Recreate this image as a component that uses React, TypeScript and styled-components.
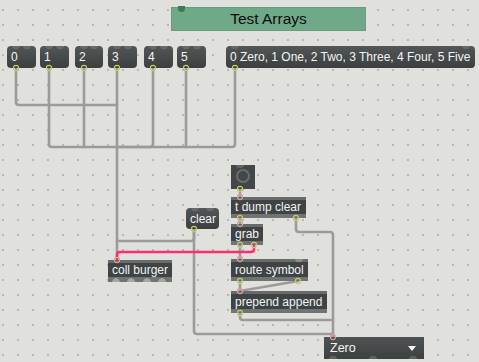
import React from 'react';
import styled, { createGlobalStyle } from 'styled-components';

const Global = createGlobalStyle`
  html, body { margin: 0; padding: 0; background: #e0e1dc; }
  body { font-family: "Liberation Sans", Arial, sans-serif; }
`;

const Canvas = styled.div`
  position: relative;
  width: 479px;
  height: 362px;
  overflow: hidden;
  background-color: #e0e1dc;
  background-image: radial-gradient(circle at 1px 1px, #a9aaa5 0.6px, transparent 1px);
  background-size: 15px 15px;
  background-position: 2px 9px;
`;

const Layer = styled.svg<{ $z: number }>`
  position: absolute;
  left: 0;
  top: 0;
  width: 479px;
  height: 362px;
  z-index: ${(p) => p.$z};
  pointer-events: none;
`;

type Pos = { $x: number; $y: number; $w: number; $h: number };

const Node = styled.div<Pos>`
  position: absolute;
  left: ${(p) => p.$x}px;
  top: ${(p) => p.$y}px;
  width: ${(p) => p.$w}px;
  height: ${(p) => p.$h}px;
  box-sizing: border-box;
  z-index: 2;
  font-size: 12px;
  white-space: nowrap;
`;

const Comment = styled(Node)`
  background: #6fa988;
  border: 1px solid #679d7f;
  color: #0c0c0c;
  font-size: 15.5px;
  display: flex;
  align-items: center;
  justify-content: center;
  &::before {
    content: '';
    position: absolute;
    left: 6px;
    top: -2px;
    width: 7px;
    height: 6px;
    border-radius: 0 0 4px 4px;
    background: #3f7a57;
  }
`;

const Message = styled(Node)`
  border-radius: 4px;
  background:
    radial-gradient(circle at 9px -1px, #666a6a 4px, transparent 4.6px),
    radial-gradient(circle at calc(100% - 9px) -1px, #666a6a 4px, transparent 4.6px),
    linear-gradient(#525656, #3c3f3f);
  color: #f3f6f7;
  padding-left: 4px;
  display: flex;
  align-items: center;
`;

const ObjectBox = styled(Node)`
  display: flex;
  flex-direction: column;
  color: #f0f4f5;
`;

const ObjTop = styled.div<{ $bumps?: number[] }>`
  height: 3px;
  flex: none;
  background: ${(p) =>
    [
      ...(p.$bumps ?? []).map(
        (b) => `radial-gradient(circle at ${b}px 0px, #8c8f8f 3.5px, transparent 4px)`
      ),
      '#686b6b',
    ].join(', ')};
`;

const ObjBody = styled.div`
  flex: 1;
  background: #3f4343;
  padding: 0 4px;
  display: flex;
  align-items: center;
  line-height: 14px;
`;

const ObjBottom = styled.div<{ $bumps?: number[]; $h: number }>`
  height: ${(p) => p.$h}px;
  flex: none;
  background: ${(p) =>
    [
      ...(p.$bumps ?? []).map(
        (b) => `radial-gradient(circle at ${b}px 100%, #a4a7a7 3.5px, transparent 4px)`
      ),
      '#717474',
    ].join(', ')};
`;

const Bang = styled(Node)`
  background:
    radial-gradient(circle at 9px -1px, #5f6363 4px, transparent 4.6px),
    #434747;
  display: flex;
  align-items: center;
  justify-content: center;
`;

const BangRing = styled.div`
  width: 14px;
  height: 14px;
  box-sizing: border-box;
  border-radius: 50%;
  border: 2px solid #6a6e6e;
  margin: -2px 0 0 0;
`;

const UMenu = styled(Node)`
  background:
    radial-gradient(circle at 9px calc(100% + 1px), #5d6161 4px, transparent 4.6px),
    radial-gradient(circle at 49px calc(100% + 1px), #5d6161 4px, transparent 4.6px),
    radial-gradient(circle at 89px calc(100% + 1px), #5d6161 4px, transparent 4.6px),
    linear-gradient(#4f5353, #3d4040);
  color: #f3f6f7;
  padding: 0 8px 0 6px;
  display: flex;
  align-items: center;
  justify-content: space-between;
  font-size: 12.5px;
`;

const Arrow = styled.div`
  width: 0;
  height: 0;
  border-left: 4px solid transparent;
  border-right: 4px solid transparent;
  border-top: 5px solid #f3f6f7;
  margin-top: 1px;
`;

type Pt = [number, number];

function roundPath(pts: Pt[], r = 3): string {
  let d = `M${pts[0][0]} ${pts[0][1]}`;
  for (let i = 1; i < pts.length - 1; i++) {
    const [x0, y0] = pts[i - 1];
    const [x1, y1] = pts[i];
    const [x2, y2] = pts[i + 1];
    const l1 = Math.hypot(x1 - x0, y1 - y0);
    const l2 = Math.hypot(x2 - x1, y2 - y1);
    const rr = Math.min(r, l1 / 2, l2 / 2);
    const ax = x1 - ((x1 - x0) / l1) * rr;
    const ay = y1 - ((y1 - y0) / l1) * rr;
    const bx = x1 + ((x2 - x1) / l2) * rr;
    const by = y1 + ((y2 - y1) / l2) * rr;
    d += ` L${ax} ${ay} Q${x1} ${y1} ${bx} ${by}`;
  }
  const last = pts[pts.length - 1];
  d += ` L${last[0]} ${last[1]}`;
  return d;
}

const grayCords: Pt[][] = [
  [[16, 68], [16, 105], [117, 105]],
  [[49, 68], [49, 147], [117, 147]],
  [[84, 68], [84, 147]],
  [[153, 68], [153, 147], [117, 147]],
  [[186, 68], [186, 147]],
  [[235, 68], [235, 147], [117, 147]],
  [[117, 68], [117, 260]],
  [[194, 229], [194, 241], [117, 241]],
  [[194, 229], [194, 334], [333, 334], [333, 337]],
  [[296, 218], [296, 232], [333, 232], [333, 337]],
  [[240, 313], [240, 320], [333, 320]],
  [[240, 189], [240, 197]],
  [[240, 218], [240, 224]],
  [[240, 245], [240, 259]],
  [[240, 281], [240, 291]],
  [[298, 281], [240, 291]],
];

const pinkCords: Pt[][] = [[[254, 245], [254, 252], [117, 252], [117, 260]]];

const outlets: Pt[] = [
  [16, 68], [49, 68], [84, 68], [117, 68], [153, 68], [186, 68], [235, 68],
  [194, 229], [240, 189], [240, 218], [296, 218], [240, 245], [254, 245],
  [240, 281], [298, 281], [240, 313],
];

const inlets: Pt[] = [
  [240, 197], [240, 224], [240, 259], [240, 291], [117, 260], [333, 337],
];

const messages = [
  { x: 7, w: 29, label: '0' },
  { x: 40, w: 29, label: '1' },
  { x: 75, w: 28, label: '2' },
  { x: 108, w: 29, label: '3' },
  { x: 144, w: 29, label: '4' },
  { x: 177, w: 29, label: '5' },
  { x: 226, w: 249, label: '0 Zero, 1 One, 2 Two, 3 Three, 4 Four, 5 Five' },
];

const objects = [
  { x: 231, y: 197, w: 75, h: 21, label: 't dump clear', top: [] as number[], bottom: [] as number[], bh: 4 },
  { x: 231, y: 224, w: 32, h: 21, label: 'grab', top: [], bottom: [], bh: 4 },
  { x: 231, y: 259, w: 77, h: 22, label: 'route symbol', top: [68], bottom: [], bh: 4 },
  { x: 231, y: 291, w: 96, h: 22, label: 'prepend append', top: [], bottom: [], bh: 4 },
  { x: 108, y: 260, w: 64, h: 22, label: 'coll burger', top: [], bottom: [8, 23, 39, 54], bh: 5 },
];

export default function App() {
  return (
    <>
      <Global />
      <Canvas>
        <Layer $z={1} viewBox="0 0 479 362">
          {grayCords.map((c, i) => (
            <path key={i} d={roundPath(c)} fill="none" stroke="#9b9b9b" strokeWidth={2.6} strokeLinecap="round" />
          ))}
          {pinkCords.map((c, i) => (
            <path key={i} d={roundPath(c)} fill="none" stroke="#ff2c6e" strokeWidth={2.6} strokeLinecap="round" />
          ))}
        </Layer>

        <Comment $x={171} $y={7} $w={195} $h={24}>Test Arrays</Comment>

        {messages.map((m) => (
          <Message key={m.label} $x={m.x} $y={46} $w={m.w} $h={22}>
            {m.label}
          </Message>
        ))}

        <Message $x={186} $y={208} $w={33} $h={21}>clear</Message>

        <Bang $x={231} $y={165} $w={24} $h={24}>
          <BangRing />
        </Bang>

        {objects.map((o) => (
          <ObjectBox key={o.label} $x={o.x} $y={o.y} $w={o.w} $h={o.h}>
            <ObjTop $bumps={o.top} />
            <ObjBody>{o.label}</ObjBody>
            <ObjBottom $bumps={o.bottom} $h={o.bh} />
          </ObjectBox>
        ))}

        <UMenu $x={324} $y={337} $w={100} $h={22}>
          <span>Zero</span>
          <Arrow />
        </UMenu>

        <Layer $z={3} viewBox="0 0 479 362">
          {outlets.map(([x, y], i) => (
            <circle key={i} cx={x} cy={y} r={2.6} fill="none" stroke="#c6c96a" strokeWidth={1.1} />
          ))}
          {inlets.map(([x, y], i) => (
            <circle key={i} cx={x} cy={y} r={2.6} fill="none" stroke="#dd9f9c" strokeWidth={1.1} />
          ))}
        </Layer>
      </Canvas>
    </>
  );
}
